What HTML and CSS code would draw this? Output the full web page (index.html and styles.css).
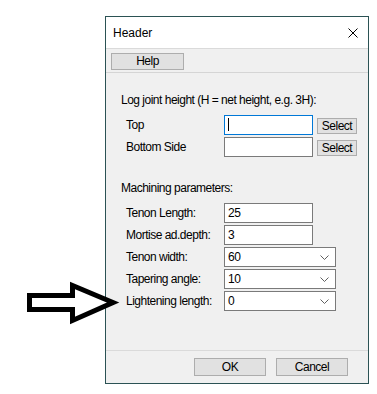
FILE: index.html
```html
<!DOCTYPE html>
<html lang="en">
<head>
    <meta charset="UTF-8">
    <meta name="viewport" content="width=device-width, initial-scale=1.0">
    <title>Header</title>
    <link rel="stylesheet" href="styles.css">
</head>
<body>
    <div class="dialog">
        <div class="titlebar">
            <span class="title">Header</span>
            <svg class="close" width="10" height="10" viewBox="0 0 10 10">
                <path d="M0.5 0.5 L9.5 9.5 M9.5 0.5 L0.5 9.5" stroke="#000" stroke-width="1" fill="none"/>
            </svg>
        </div>
        <div class="toolbar">
            <div class="btn btn-help">Help</div>
        </div>
        <div class="content">
            <div class="heading">Log joint height (H = net height, e.g. 3H):</div>
            <div class="rows">
                <div class="label">Top</div>
                <div class="field focused"><span class="caret"></span></div>
                <div class="btn btn-select">Select</div>

                <div class="label">Bottom Side</div>
                <div class="field"></div>
                <div class="btn btn-select">Select</div>
            </div>

            <div class="heading heading-2">Machining parameters:</div>
            <div class="rows">
                <div class="label">Tenon Length:</div>
                <div class="field">25</div>
                <div></div>

                <div class="label">Mortise ad.depth:</div>
                <div class="field">3</div>
                <div></div>

                <div class="label">Tenon width:</div>
                <div class="field combo">60<svg class="chev" width="9" height="5" viewBox="0 0 9 5"><path d="M0.5 0.5 L4.5 4.5 L8.5 0.5" stroke="#606060" fill="none"/></svg></div>
                <div></div>

                <div class="label">Tapering angle:</div>
                <div class="field combo">10<svg class="chev" width="9" height="5" viewBox="0 0 9 5"><path d="M0.5 0.5 L4.5 4.5 L8.5 0.5" stroke="#606060" fill="none"/></svg></div>
                <div></div>

                <div class="label">Lightening length:</div>
                <div class="field combo">0<svg class="chev" width="9" height="5" viewBox="0 0 9 5"><path d="M0.5 0.5 L4.5 4.5 L8.5 0.5" stroke="#606060" fill="none"/></svg></div>
                <div></div>
            </div>
        </div>
        <div class="footer">
            <div class="btn btn-ok">OK</div>
            <div class="btn btn-cancel">Cancel</div>
        </div>
    </div>

    <!-- pointer arrow drawn over the dialog -->
    <svg class="arrow" width="130" height="340" viewBox="0 0 130 340">
        <polygon points="29.5,295.5 72.5,295.5 72.5,285.5 113,302.5 72.5,320.5 72.5,309.5 29.5,309.5"
                 fill="#fff" stroke="#000" stroke-width="5" stroke-linejoin="miter"/>
    </svg>
</body>
</html>
```

FILE: styles.css
```css
body {
    margin: 0;
    background-color: #ffffff;
    font-family: "Liberation Sans", Arial, sans-serif;
    font-size: 12px;
    letter-spacing: -0.5px;
    color: #000000;
}
.dialog {
    margin: 16px 0 0 105px;
    width: 262px;
    height: 366px;
    border: 1px solid #2b5254;
    background-color: #f0f0f0;
    display: flex;
    flex-direction: column;
}
.titlebar {
    height: 31px;
    background-color: #ffffff;
    border-bottom: 1px solid #dadada;
    display: flex;
    align-items: center;
    justify-content: space-between;
    padding: 0 10px 0 7px;
    font-size: 12px;
    letter-spacing: 0;
}
.title {
    margin-top: 1px;
}
.close {
    display: block;
    margin-top: 1px;
}
.toolbar {
    height: 24px;
    border-bottom: 1px solid #d5d5d5;
    padding: 4px 0 0 5px;
    box-sizing: border-box;
}
.btn {
    box-sizing: border-box;
    background-color: #e1e1e1;
    border: 1px solid #adadad;
    text-align: center;
    line-height: 15px;
}
.btn-help {
    width: 73px;
    height: 17px;
}
.content {
    flex: 1;
    padding: 20px 0 0 15px;
}
.heading {
    line-height: 15px;
}
.heading-2 {
    margin-top: 24px;
}
.rows {
    display: grid;
    grid-template-columns: 94px 89px 40px;
    column-gap: 4px;
    row-gap: 2px;
    margin: 7px 0 0 5px;
    align-items: start;
}
.label {
    line-height: 20px;
}
.field {
    position: relative;
    box-sizing: border-box;
    height: 20px;
    background-color: #ffffff;
    border: 1px solid #7a7a7a;
    padding-left: 3px;
    line-height: 18px;
}
.field.focused {
    border-color: #0078d7;
}
.caret {
    display: block;
    width: 1px;
    height: 13px;
    margin: 2px 0 0 0;
    background-color: #000000;
}
.combo {
    width: 112px;
}
.chev {
    position: absolute;
    right: 6px;
    top: 7px;
}
.btn-select {
    height: 16px;
    margin-top: 3px;
    line-height: 14px;
}
.footer {
    height: 33px;
    border-top: 1px solid #dadada;
    display: flex;
    justify-content: flex-end;
    gap: 10px;
    padding: 7px 20px 0 0;
    box-sizing: border-box;
}
.btn-ok,
.btn-cancel {
    width: 72px;
    height: 18px;
    line-height: 16px;
}
.arrow {
    position: absolute;
    left: 0;
    top: 0;
}
```
